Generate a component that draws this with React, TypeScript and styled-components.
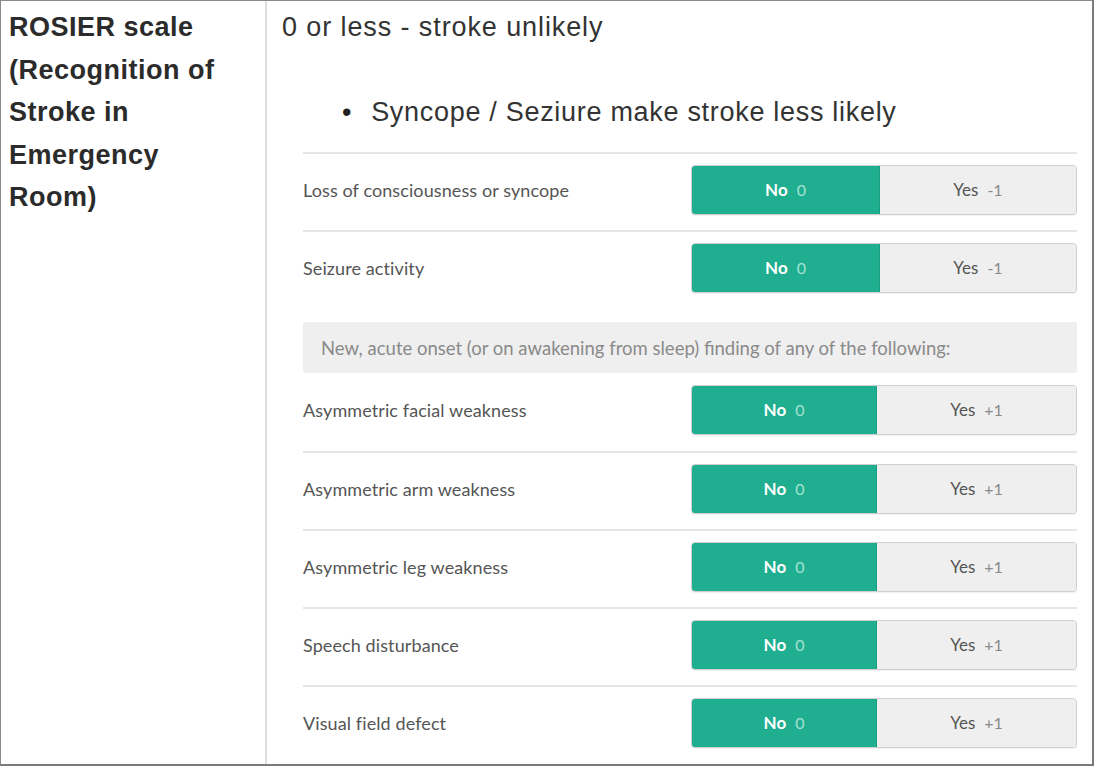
import React from "react";
import styled, { createGlobalStyle } from "styled-components";

type Item = { label: string; yes: string };

const before: Item[] = [
  { label: "Loss of consciousness or syncope", yes: "-1" },
  { label: "Seizure activity", yes: "-1" },
];

const after: Item[] = [
  { label: "Asymmetric facial weakness", yes: "+1" },
  { label: "Asymmetric arm weakness", yes: "+1" },
  { label: "Asymmetric leg weakness", yes: "+1" },
  { label: "Speech disturbance", yes: "+1" },
  { label: "Visual field defect", yes: "+1" },
];

const Row = ({ label, yes, narrow }: Item & { narrow?: boolean }) => (
  <RowWrap>
    <Label>{label}</Label>
    <Toggle>
      <Choice $active $width={narrow ? 185 : 188}>
        <strong>No</strong>
        <Points $active>0</Points>
      </Choice>
      <Choice>
        <span>Yes</span>
        <Points>{yes}</Points>
      </Choice>
    </Toggle>
  </RowWrap>
);

export default function App() {
  return (
    <>
      <GlobalStyle />
      <Frame>
        <Side>
          <Heading>ROSIER scale (Recognition of Stroke in Emergency Room)</Heading>
        </Side>
        <Main>
          <Result>0 or less - stroke unlikely</Result>
          <Notes>
            <Note>Syncope / Seziure make stroke less likely</Note>
          </Notes>
          <Calc>
            {before.map((it) => (
              <Row key={it.label} {...it} />
            ))}
            <Section>New, acute onset (or on awakening from sleep) finding of any of the following:</Section>
            {after.map((it) => (
              <Row key={it.label} {...it} narrow />
            ))}
          </Calc>
        </Main>
      </Frame>
    </>
  );
}

const GlobalStyle = createGlobalStyle`
  * { box-sizing: border-box; }
  body {
    margin: 0;
    background: #fff;
    font-family: "Liberation Sans", Arial, sans-serif;
  }
`;

const Frame = styled.div`
  width: 1094px;
  height: 766px;
  display: flex;
  border-top: 1px solid #8a8a8a;
  border-left: 1px solid #8a8a8a;
  border-right: 2px solid #7a7a7a;
  border-bottom: 2px solid #7a7a7a;
  overflow: hidden;
`;

const Side = styled.div`
  width: 266px;
  flex-shrink: 0;
  border-right: 2px solid #dedede;
  padding: 5px 0 0 8px;
`;

const Heading = styled.h2`
  margin: 0;
  max-width: 232px;
  font-family: "Liberation Sans", Arial, sans-serif;
  font-weight: 700;
  font-size: 27px;
  letter-spacing: 0.5px;
  line-height: 42.5px;
  color: #2b2b2b;
`;

const Main = styled.div`
  flex: 1;
  padding: 5px 15px 0 15px;
  color: #333;
  font-family: "Liberation Sans", Arial, sans-serif;
`;

const Result = styled.div`
  font-size: 27px;
  letter-spacing: 0.9px;
  line-height: 42px;
  color: #333;
`;

const Notes = styled.ul`
  margin: 43px 0 0;
  padding-left: 60px;
  list-style: none;
  font-size: 27px;
  letter-spacing: 0.7px;
  line-height: 42px;
  color: #333;
`;

const Note = styled.li`
  display: flex;
  gap: 19px;

  &::before {
    content: "•";
    font-size: 27px;
    color: #222;
  }
`;

const Calc = styled.div`
  margin: 19px 0 0 21px;
  font-family: "Lato", "Open Sans", sans-serif;
`;

const RowWrap = styled.div`
  display: flex;
  align-items: center;
  justify-content: space-between;
  height: 78px;
  padding: 11px 0 16px;
  border-top: 2px solid #e6e6e6;
`;

const Label = styled.div`
  font-size: 18px;
  color: #555;
  letter-spacing: 0.1px;
`;

const Toggle = styled.div`
  display: flex;
  width: 386px;
  height: 50px;
  border-radius: 4px;
  overflow: hidden;
  background: #efefef;
  border: 1px solid #cfcfcf;
  box-shadow: 0 1px 1px rgba(0, 0, 0, 0.06);
`;

const Choice = styled.div<{ $active?: boolean; $width?: number }>`
  ${({ $width }) => ($width ? `width: ${$width}px;` : "flex: 1;")}
  flex-shrink: 0;
  display: flex;
  align-items: center;
  justify-content: center;
  gap: 9px;
  font-size: 17px;
  background: ${({ $active }) => ($active ? "#1fae8f" : "#efefef")};
  color: ${({ $active }) => ($active ? "#fff" : "#555")};
  border-right: ${({ $active }) => ($active ? "1px solid #1a9c80" : "none")};

  strong {
    font-weight: 700;
  }
`;

const Points = styled.span<{ $active?: boolean }>`
  font-size: 16px;
  color: ${({ $active }) => ($active ? "#a6e3d3" : "#8a8a8a")};
`;

const Section = styled.div`
  margin: 14px 0 0;
  height: 51px;
  display: flex;
  align-items: center;
  padding-left: 18px;
  background: #efefef;
  border-radius: 2px;
  font-size: 18.5px;
  color: #8a8a8a;

  & + ${RowWrap} {
    border-top: none;
  }
`;
